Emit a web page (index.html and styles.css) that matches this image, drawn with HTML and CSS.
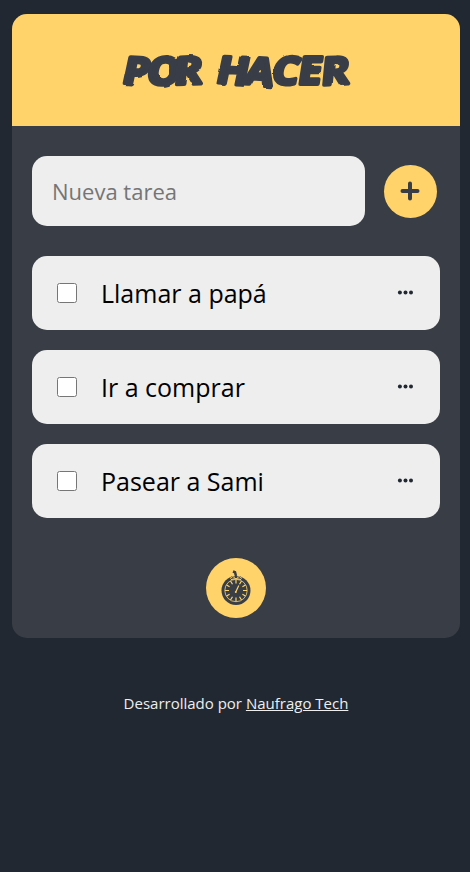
FILE: index.html
```html
<!DOCTYPE html>
<html lang="es">
<head>
<meta charset="utf-8">
<meta name="viewport" content="width=device-width, initial-scale=1">
<title>Por hacer</title>
<link rel="stylesheet" href="styles.css">
</head>
<body>
<main class="card">
  <header class="header">
    <h1 class="title">
      <svg class="title-art" width="260" height="70" viewBox="-10 -10 260 70">
        <filter id="rough" x="-5%" y="-20%" width="110%" height="140%">
          <feTurbulence type="fractalNoise" baseFrequency="0.06" numOctaves="1" seed="4"/>
          <feDisplacementMap in="SourceGraphic" scale="3" xChannelSelector="R" yChannelSelector="G" result="wavy"/>
          <feGaussianBlur in="wavy" stdDeviation="0.4"/>
        </filter>
        <g filter="url(#rough)">
          <text class="title-text" y="39 39 39.5 39 38.5 39.5 38.5 38.5 40" x="6.500 28.500 54 80 91.500 117 142 166 188" rotate="3 2 -2 0 3 4 3 0 -3" transform="translate(4 0) scale(1.1 1) skewX(-8)">POR HACER</text>
        </g>
      </svg>
    </h1>
  </header>
  <form class="new-task">
    <input class="field" type="text" placeholder="Nueva tarea">
    <button class="round add" type="button" aria-label="Agregar">
      <svg width="20" height="20" viewBox="0 0 20 20"><path class="plus" d="M10 2.500v15M2.500 10h15"/></svg>
    </button>
  </form>
  <ul class="tasks">
    <li class="task"><input class="check" type="checkbox"><span class="label">Llamar a papá</span><svg class="dots" width="16" height="6" viewBox="0 0 16 6"><circle cx="2.9" cy="2.5" r="2"/><circle cx="8.500" cy="2.5" r="2"/><circle cx="14" cy="2.5" r="2"/></svg></li>
    <li class="task"><input class="check" type="checkbox"><span class="label">Ir a comprar</span><svg class="dots" width="16" height="6" viewBox="0 0 16 6"><circle cx="2.9" cy="2.5" r="2"/><circle cx="8.500" cy="2.5" r="2"/><circle cx="14" cy="2.5" r="2"/></svg></li>
    <li class="task"><input class="check" type="checkbox"><span class="label">Pasear a Sami</span><svg class="dots" width="16" height="6" viewBox="0 0 16 6"><circle cx="2.9" cy="2.5" r="2"/><circle cx="8.500" cy="2.5" r="2"/><circle cx="14" cy="2.5" r="2"/></svg></li>
  </ul>
  <button class="round timer" type="button" aria-label="Temporizador">
    <svg width="30" height="36" viewBox="0 0 30 36">
      <circle class="ink" cx="15" cy="20.5" r="14.5"/>
      <path class="ink" d="M8 9l3-3h8l3 3v4H8z"/>
      <path class="hook" d="M12 1.500l2 .8 1 3.700"/>
      <circle class="dial" cx="15" cy="20.5" r="11.2"/>
      <path class="trim" d="M9 8.5q2-3 5-1.200M16 7.300q3-1.800 5 1.200M10 9.500q5-2 10 0"/>
      <path class="ticks" d="M15 9.500v4M15 27.500v4M4 20.500h4M22 20.500h4M9.500 11l2 3.300M20.500 11l-2 3.300M5.500 15l3.100 1.800M24.500 15l-3.100 1.800M5.500 26l3.100-1.800M24.500 26l-3.100-1.800M9.500 30l2-3.300M20.500 30l-2-3.300M15 21.500l2.800-6"/>
      <circle class="pin" cx="14.800" cy="22" r="1"/>
    </svg>
  </button>
</main>
<footer class="footer">Desarrollado por <a class="link" href="#">Naufrago Tech</a></footer>
</body>
</html>
```
FILE: styles.css
```css
* { box-sizing: border-box; }
body {
  margin: 0;
  padding: 14px 10px 0 12px;
  min-height: 100vh;
  background: #222831;
  font-family: "Open Sans", sans-serif;
}
.card {
  height: 624px;
  border-radius: 15px;
  background: #393e46;
  overflow: hidden;
}
.header {
  height: 112px;
  display: flex;
  align-items: center;
  justify-content: center;
  background: #ffd369;
}
.title { margin: 0; line-height: 0; }
.title-art { overflow: visible; }
.title-text {
  font: 700 38px "Open Sans", sans-serif;
  fill: #393e46;
  stroke: #393e46;
  stroke-width: 3.8px;
  stroke-linejoin: round;
}
.new-task {
  display: flex;
  align-items: center;
  gap: 18.5px;
  padding: 30px 20px;
}
.field {
  width: 333px;
  height: 70px;
  padding: 0 20px;
  border: 0;
  border-radius: 15px;
  background: #eee;
  font: 400 22px "Open Sans", sans-serif;
}
.field::placeholder { color: #757575; }
.round {
  display: flex;
  align-items: center;
  justify-content: center;
  padding: 0;
  border: 0;
  border-radius: 50%;
  background: #ffd369;
}
.add { width: 53px; height: 53px; }
.plus { fill: none; stroke: #393e46; stroke-width: 4; stroke-linecap: round; }
.tasks {
  display: grid;
  gap: 20px;
  margin: 0;
  padding: 0 20px;
  list-style: none;
}
.task {
  display: flex;
  align-items: center;
  height: 74px;
  padding: 0 27px 0 25px;
  border-radius: 15px;
  background: #eee;
}
.check { width: 20px; height: 20px; margin: 0 24px 0 0; }
.label { flex: 1; font-size: 25px; color: #000; }
.dots { fill: #222831; }
.timer { width: 60px; height: 60px; margin: 40px auto 0; }
.ink { fill: #393e46; }
.hook { fill: none; stroke: #393e46; stroke-width: 2.5; }
.dial { fill: none; stroke: #ffd369; stroke-width: .8; }
.trim { fill: none; stroke: #ffd369; stroke-width: 1; }
.ticks { fill: none; stroke: #ffd369; stroke-width: 1.2; }
.pin { fill: #ffd369; }
.footer {
  margin-top: 55px;
  text-align: center;
  font-size: 15px;
  line-height: 20px;
  color: #eee;
}
.link { color: inherit; }
```
